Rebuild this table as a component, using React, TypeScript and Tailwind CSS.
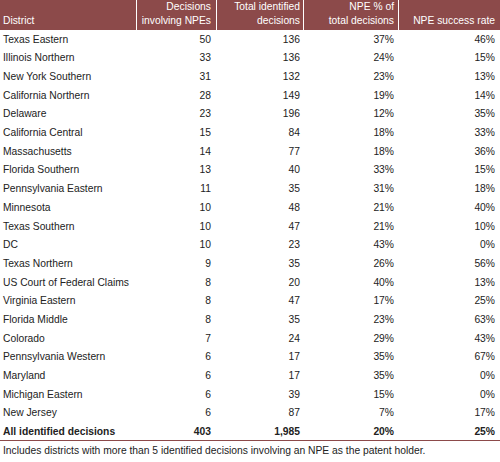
const rows: [string, string, string, string, string][] = [
  ["Texas Eastern", "50", "136", "37%", "46%"],
  ["Illinois Northern", "33", "136", "24%", "15%"],
  ["New York Southern", "31", "132", "23%", "13%"],
  ["California Northern", "28", "149", "19%", "14%"],
  ["Delaware", "23", "196", "12%", "35%"],
  ["California Central", "15", "84", "18%", "33%"],
  ["Massachusetts", "14", "77", "18%", "36%"],
  ["Florida Southern", "13", "40", "33%", "15%"],
  ["Pennsylvania Eastern", "11", "35", "31%", "18%"],
  ["Minnesota", "10", "48", "21%", "40%"],
  ["Texas Southern", "10", "47", "21%", "10%"],
  ["DC", "10", "23", "43%", "0%"],
  ["Texas Northern", "9", "35", "26%", "56%"],
  ["US Court of Federal Claims", "8", "20", "40%", "13%"],
  ["Virginia Eastern", "8", "47", "17%", "25%"],
  ["Florida Middle", "8", "35", "23%", "63%"],
  ["Colorado", "7", "24", "29%", "43%"],
  ["Pennsylvania Western", "6", "17", "35%", "67%"],
  ["Maryland", "6", "17", "35%", "0%"],
  ["Michigan Eastern", "6", "39", "15%", "0%"],
  ["New Jersey", "6", "87", "7%", "17%"],
];

const grid = "grid grid-cols-[136px_80px_87px_95px_102px]";
const pads = ["pl-[3px]", "pr-[5px] text-right", "pr-[3px] text-right", "pr-[4px] text-right", "pr-[5px] text-right"];

export default function App() {
  return (
    <div
      className="w-[500px] h-[462px] bg-white text-[#222] text-[10.3px] overflow-hidden"
      style={{ fontFamily: '"Liberation Sans", Arial, sans-serif' }}
    >
      <div className={`${grid} bg-[#8c4a4a] text-white leading-[14px] h-[30px]`}>
        <div className="flex items-end pb-[2px] pl-[3px]">District</div>
        <div className="flex items-end justify-end pb-[2px] pr-[5px] text-right border-l border-white">
          Decisions<br />involving NPEs
        </div>
        <div className="flex items-end justify-end pb-[2px] pr-[3px] text-right border-l border-white">
          Total identified<br />decisions
        </div>
        <div className="flex items-end justify-end pb-[2px] pr-[4px] text-right border-l border-white">
          NPE % of<br />total decisions
        </div>
        <div className="flex items-end justify-end pb-[2px] pr-[5px] text-right border-l border-white">
          NPE success rate
        </div>
      </div>

      {rows.map((r) => (
        <div key={r[0]} className={`${grid} h-[18.7px] items-center`}>
          {r.map((c, i) => (
            <div key={i} className={pads[i]}>
              {c}
            </div>
          ))}
        </div>
      ))}

      <div className={`${grid} h-[18.7px] items-center font-bold border-b border-[#8c4a4a]`}>
        {["All identified decisions", "403", "1,985", "20%", "25%"].map((c, i) => (
          <div key={i} className={pads[i]}>
            {c}
          </div>
        ))}
      </div>

      <div className="pl-[3px] pt-[2px] leading-[16px]">
        Includes districts with more than 5 identified decisions involving an NPE as the patent holder.
      </div>
    </div>
  );
}
